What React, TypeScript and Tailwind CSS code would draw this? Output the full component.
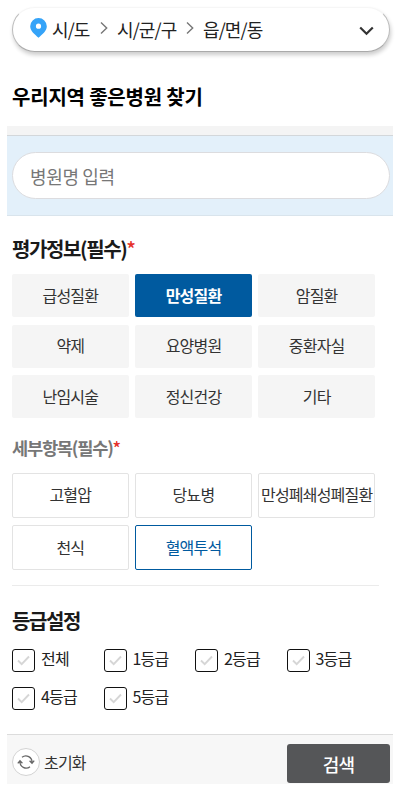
import { useState } from 'react';
import clsx from 'clsx';

const categories = ['급성질환', '만성질환', '암질환', '약제', '요양병원', '중환자실', '난임시술', '정신건강', '기타'];
const details = ['고혈압', '당뇨병', '만성폐쇄성폐질환', '천식', '혈액투석'];
const grades = ['전체', '1등급', '2등급', '3등급', '4등급', '5등급'];

function Separator() {
  return (
    <svg width="8" height="14" viewBox="0 0 8 14" fill="none" stroke="#777" strokeWidth="1.4" className="mb-[3px] shrink-0">
      <path d="M1 1.5 6.7 7 1 12.5" />
    </svg>
  );
}

function RegionSelect() {
  return (
    <button className="flex h-[45px] w-[378px] items-center rounded-full border border-t-[#f6f6f6] border-r-[#bbb] border-b-[#aaa] border-l-[#bbb] bg-white pr-[15px] pl-[17px] text-[18px] tracking-[-0.05em] text-[#222] shadow-[1px_3px_4px_rgba(0,0,0,0.2)]">
      <svg width="17" height="20" viewBox="0 0 17 20" className="mr-[5px] mb-[3px] shrink-0">
        <path
          fill="#35a3f8"
          fillRule="evenodd"
          d="M8.5 0A8.3 8.3 0 0 0 .2 8.2c0 5 4.3 7.5 8.3 11.6 4-4.1 8.3-6.6 8.3-11.6A8.3 8.3 0 0 0 8.5 0Zm0 5.600a2.600 2.600 0 1 1 0 5.200 2.600 2.600 0 0 1 0-5.200Z"
        />
      </svg>
      <span className="mb-px w-[48px] text-left">시/도</span>
      <Separator />
      <span className="mb-px ml-[9px] w-[69px] text-left">시/군/구</span>
      <Separator />
      <span className="mb-px ml-[9px] text-left">읍/면/동</span>
      <svg width="15" height="10" viewBox="0 0 15 10" fill="none" stroke="#333" strokeWidth="2.2" className="mt-[2px] ml-auto">
        <path d="M1.200 1.500 7.500 7.800 13.800 1.500" />
      </svg>
    </button>
  );
}

function Required() {
  return <span className="font-medium text-[#e5302a]">*</span>;
}

function GradeCheck({ label }: { label: string }) {
  return (
    <label className="flex h-[23px] items-center">
      <span className="flex size-[23px] shrink-0 items-center justify-center rounded-[3px] border-[1.5px] border-[#111] bg-white">
        <svg width="13" height="11" viewBox="0 0 13 11" fill="none" stroke="#d6d6d6" strokeWidth="1.9">
          <path d="M1 5.500 4.700 9.200 12 1.500" />
        </svg>
      </span>
      <span className="-mt-[5px] ml-[6px] text-[#222]">{label}</span>
    </label>
  );
}

export default function App() {
  const [category, setCategory] = useState('만성질환');
  const [detail, setDetail] = useState('혈액투석');

  return (
    <main className="flex h-[791px] w-[400px] flex-col overflow-hidden bg-white px-[7px] pt-[7px] font-['Noto_Sans_CJK_KR',sans-serif] text-[16px] leading-none tracking-[-0.05em] text-[#333]">
      <div className="h-[119px] shrink-0 pl-[5px]">
        <RegionSelect />
        <h1 className="mt-[35px] text-[20px] font-bold tracking-[-0.01em] text-black">우리지역 좋은병원 찾기</h1>
      </div>

      <div className="h-[90px] shrink-0 border-t-[9px] border-b border-t-[#f4f4f4] border-b-[#d9e4ec] bg-[#e3f0fa]">
        <div className="h-full border-t border-[#d3d7da] pt-[16px] pl-[5px]">
          <input
            className="h-[47px] w-[378px] rounded-full border border-[#dcdcdf] bg-white px-[17px] text-[18px] tracking-[-0.02em] placeholder:text-[#777]"
            placeholder="병원명 입력"
          />
        </div>
      </div>

      <section className="h-[518px] shrink-0 px-[5px] pt-[23px]">
        <h2 className="text-[20px] font-bold tracking-[-0.07em] text-[#1a1a1a]">
          평가정보(필수)
          <Required />
        </h2>
        <div className="mt-[15px] grid w-[363px] grid-cols-3 gap-x-[6.5px] gap-y-[7.5px]">
          {categories.map((name) => (
            <button
              key={name}
              onClick={() => setCategory(name)}
              className={clsx(
                'h-[43px] rounded-[2px] pb-[2px]',
                name === category ? 'bg-[#005a9f] font-bold text-white' : 'bg-[#f5f5f5]'
              )}
            >
              {name}
            </button>
          ))}
        </div>

        <h3 className="mt-[21px] text-[17.6px] font-bold tracking-[-0.07em] text-[#777]">
          세부항목(필수)
          <Required />
        </h3>
        <div className="mt-[16px] grid w-[363px] grid-cols-3 gap-x-[6.5px] gap-y-[7.5px]">
          {details.map((name) => (
            <button
              key={name}
              onClick={() => setDetail(name)}
              className={clsx(
                'h-[45px] rounded-[2px] border pb-[2px] whitespace-nowrap',
                name === detail ? 'border-[#005a9f] text-[#005a9f]' : 'border-[#e3e3e3]'
              )}
            >
              {name}
            </button>
          ))}
        </div>

        <hr className="mt-[15px] w-[367px] border-[#ebebeb]" />

        <h2 className="mt-[25px] text-[20px] font-bold tracking-[-0.07em] text-[#1a1a1a]">등급설정</h2>
        <div className="mt-[18px] grid w-[366px] grid-cols-4 gap-y-[15px]">
          {grades.map((grade) => (
            <GradeCheck key={grade} label={grade} />
          ))}
        </div>
      </section>

      <footer className="flex h-[50px] shrink-0 items-center border-t border-[#dcdcdc] bg-[#f7f7f7] pr-[3px] pl-[5px]">
        <button className="flex items-center gap-[4px] pt-[4px]">
          <span className="flex size-[28px] items-center justify-center rounded-full border border-[#d3d3d3] bg-white">
            <svg width="18" height="16" viewBox="0 0 18 16" fill="none" stroke="#666" strokeWidth="1.3">
              <path d="M5 3.200A6.200 6.200 0 0 1 15 8.500M12.600 6.800 15 9.300 17.200 6.600" />
              <path d="M13 12.800A6.200 6.200 0 0 1 3 7.500M.800 9.400 3 6.700 5.400 9.200" />
            </svg>
          </span>
          <span>초기화</span>
        </button>
        <button className="mt-[8px] ml-auto h-[39px] w-[103px] rounded-[3px] bg-[#555658] text-[18px] font-medium text-white">
          검색
        </button>
      </footer>
    </main>
  );
}
